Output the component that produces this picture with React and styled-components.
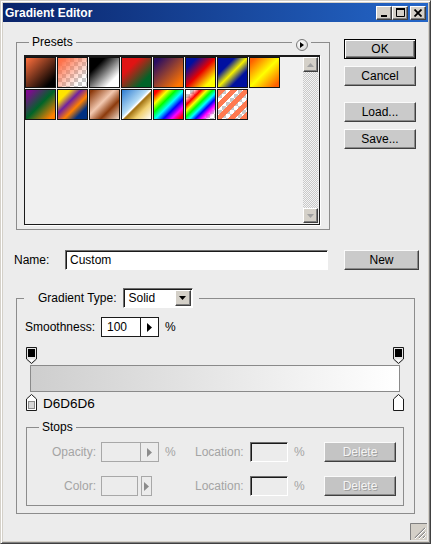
import React from "react";
import styled, { createGlobalStyle } from "styled-components";

const GlobalStyle = createGlobalStyle`
  html, body { margin: 0; padding: 0; background: #d4d0c8; }
  body {
    font-family: "Liberation Sans", Arial, sans-serif;
    font-size: 12px;
    color: #000;
  }
  * { box-sizing: border-box; }
`;

const CHECK =
  "conic-gradient(#c8c8c8 25%, #fff 0 50%, #c8c8c8 0 75%, #fff 0) 0 0 / 8px 8px";

const presets = [
  "linear-gradient(135deg, #f26a3a 5%, #000 85%)",
  `linear-gradient(135deg, #ff7048 10%, rgba(255,112,72,0) 80%), ${CHECK}`,
  "linear-gradient(135deg, #000 25%, #fff 78%)",
  "linear-gradient(135deg, #e01414 30%, #006428 78%)",
  "linear-gradient(135deg, #2a0e62 10%, #ff7400 88%)",
  "linear-gradient(135deg, #0010a0 18%, #e80000 50%, #ffff00 82%)",
  "linear-gradient(135deg, #0010a0 28%, #f4f000 50%, #0010a0 72%)",
  "linear-gradient(135deg, #ff6000 8%, #ffff00 50%, #ff6000 92%)",
  "linear-gradient(135deg, #800a90 8%, #006428 50%, #ff8000 90%)",
  "linear-gradient(135deg, #ffe400 20%, #7020a0 40%, #ff8000 60%, #003080 80%)",
  "linear-gradient(135deg, #8c3a0c 5%, #f2c8b0 42%, #8c3a0c 68%, #f2dccc 100%)",
  "linear-gradient(135deg, #2e7bd0 0%, #b4dcf5 44%, #fff 50%, #a07010 54%, #f0d070 72%, #fff 100%)",
  "linear-gradient(135deg, #f00 8%, #ff0 24%, #0f0 38%, #0ff 52%, #00f 66%, #f0f 80%, #f00 94%)",
  `linear-gradient(135deg, rgba(255,0,0,0) 12%, #f00 26%, #ff0 36%, #0f0 46%, #0ff 56%, #00f 66%, #f0f 76%, rgba(255,0,255,0) 90%), ${CHECK}`,
  `repeating-linear-gradient(135deg, #ff7a50 0 5px, rgba(255,122,80,0) 5px 9px), ${CHECK}`,
];

const Window = styled.div`
  width: 431px;
  height: 544px;
  display: flex;
  flex-direction: column;
  background: #d4d0c8;
  border: 1px solid;
  border-color: #d4d0c8 #404040 #404040 #d4d0c8;
  box-shadow: inset 1px 1px 0 #fff, inset -1px -1px 0 #808080;
  padding: 2px;
`;

const TitleBar = styled.div`
  height: 19px;
  display: flex;
  align-items: center;
  padding: 0 2px 0 2px;
  background: linear-gradient(90deg, #0a246a, #2466c8);
`;

const Title = styled.span`
  flex: 1;
  color: #fff;
  font-weight: bold;
  font-size: 12px;
`;

const CaptionButton = styled.div`
  width: 16px;
  height: 14px;
  margin-left: ${(p) => p.$gap || 0}px;
  background: #d4d0c8;
  border: 1px solid;
  border-color: #fff #404040 #404040 #fff;
  box-shadow: inset -1px -1px 0 #808080;
  display: flex;
  align-items: center;
  justify-content: center;
`;

const Body = styled.div`
  flex: 1;
  display: flex;
  flex-direction: column;
  background: #ececec;
  padding: 14px 0 0 13px;
`;

const TopSection = styled.div`
  display: flex;
  align-items: flex-start;
  gap: 14px;
`;

const Group = styled.fieldset`
  position: relative;
  margin: 0;
  min-width: 0;
  border: 1px solid #8c8c8c;
  border-radius: 0;
`;

const PresetsGroup = styled(Group)`
  width: 314px;
  padding: 0 9px 4px 7px;
`;

const GroupLabel = styled.legend`
  padding: 0 3px;
  margin-left: ${(p) => p.$ml || 0}px;
  line-height: 13px;
  font-size: 12px;
`;

const MenuButtonWrap = styled.div`
  position: absolute;
  top: -11px;
  right: 18px;
  width: 19px;
  height: 13px;
  background: #ececec;
  display: flex;
  align-items: center;
  justify-content: center;
`;

const MenuCircle = styled.div`
  width: 12px;
  height: 12px;
  border-radius: 50%;
  border: 1px solid #7a7a7a;
  background: radial-gradient(circle at 35% 35%, #fff, #d0d0d0);
  display: flex;
  align-items: center;
  justify-content: center;
`;

const PresetList = styled.div`
  width: 296px;
  height: 170px;
  margin-top: 6px;
  display: flex;
  background: #f0f0f0;
  border: 1px solid #1a1a1a;
  border-top-width: 2px;
  box-shadow: 1px 1px 0 #fff;
`;

const SwatchGrid = styled.div`
  flex: 1;
  display: grid;
  grid-template-columns: repeat(8, 31px);
  grid-auto-rows: 31px;
  gap: 1px;
  align-content: start;
`;

const Swatch = styled.div`
  border: 1px solid #141414;
  background: ${(p) => p.$bg};
`;

const ScrollBar = styled.div`
  width: 15px;
  margin: 0 1px 1px 0;
  display: flex;
  flex-direction: column;
  justify-content: space-between;
  background: repeating-conic-gradient(#c8c8c8 0 25%, #f4f4f4 0 50%) 0 0 / 2px 2px;
`;

const ScrollButton = styled.div`
  height: 15px;
  background: #d4d0c8;
  border: 1px solid;
  border-color: #fff #404040 #404040 #fff;
  box-shadow: inset -1px -1px 0 #808080;
  display: flex;
  align-items: center;
  justify-content: center;
`;

const ButtonColumn = styled.div`
  display: flex;
  flex-direction: column;
  padding-top: 3px;
`;

const Button = styled.div`
  width: ${(p) => p.$w || 72}px;
  height: 20px;
  margin-top: ${(p) => p.$mt || 0}px;
  margin-left: ${(p) => p.$ml || 0}px;
  display: flex;
  align-items: center;
  justify-content: center;
  font-size: 12px;
  background: ${(p) => (p.$disabled ? "#c4c4c4" : "#cacaca")};
  color: ${(p) => (p.$disabled ? "#f4f4f4" : "#000")};
  text-shadow: ${(p) => (p.$disabled ? "1px 1px 0 #a0a0a0" : "none")};
  border: 1px solid;
  border-color: ${(p) =>
    p.$default ? "#000" : "#fafafa #404040 #404040 #fafafa"};
  box-shadow: ${(p) =>
    p.$default
      ? "inset 1px 1px 0 #fff, inset -1px -1px 0 #404040, inset -2px -2px 0 #808080"
      : "inset -1px -1px 0 #8a8a8a"};
`;

const NameRow = styled.div`
  display: flex;
  align-items: center;
  height: 20px;
  margin: 20px 0 0 -2px;
`;

const Label = styled.span`
  width: ${(p) => p.$w}px;
  flex-shrink: 0;
  font-size: 12px;
  color: ${(p) => (p.$disabled ? "#a4a4a4" : "#000")};
  text-align: ${(p) => (p.$right ? "right" : "left")};
  padding-right: ${(p) => (p.$right ? 5 : 0)}px;
  padding-left: ${(p) => p.$pl || 0}px;
`;

const TextField = styled.div`
  width: ${(p) => p.$w}px;
  height: 20px;
  display: flex;
  align-items: center;
  padding-left: 4px;
  font-size: 12px;
  background: ${(p) => (p.$disabled ? "#ececec" : "#fff")};
  border: 1px solid;
  border-color: #6e6e6e #fff #fff #6e6e6e;
  box-shadow: inset 1px 1px 0 #1a1a1a;
`;

const GradientGroup = styled(Group)`
  width: 399px;
  margin-top: 18px;
  padding: 0 9px 7px 9px;
`;

const TypeLegend = styled.legend`
  display: flex;
  align-items: center;
  height: 20px;
  margin-left: -2px;
  padding: 0 6px 0 14px;
  font-size: 12px;
`;

const Select = styled.div`
  width: 70px;
  height: 20px;
  margin-left: 6px;
  display: flex;
  align-items: center;
  justify-content: space-between;
  padding: 0 1px 0 5px;
  background: #fff;
  border: 1px solid;
  border-color: #6e6e6e #fff #fff #6e6e6e;
  box-shadow: inset 1px 1px 0 #1a1a1a;
`;

const DropButton = styled.div`
  width: 16px;
  height: 16px;
  background: #d4d0c8;
  border: 1px solid;
  border-color: #fff #404040 #404040 #fff;
  box-shadow: inset -1px -1px 0 #808080;
  display: flex;
  align-items: center;
  justify-content: center;
`;

const SmoothRow = styled.div`
  display: flex;
  align-items: center;
  height: 20px;
  margin: 9px 0 0 -1px;
`;

const SpinBox = styled.div`
  width: 58px;
  height: 20px;
  display: flex;
  background: ${(p) => (p.$disabled ? "#ececec" : "#fff")};
  border: 1px solid ${(p) => (p.$disabled ? "#a8a8a8" : "#1a1a1a")};
`;

const SpinValue = styled.div`
  flex: 1;
  display: flex;
  align-items: center;
  padding-left: 5px;
  font-size: 12px;
`;

const SpinArrow = styled.div`
  width: 18px;
  display: flex;
  align-items: center;
  justify-content: center;
  border-left: 1px solid ${(p) => (p.$disabled ? "#a8a8a8" : "#1a1a1a")};
`;

const Percent = styled.span`
  margin-left: 6px;
  color: ${(p) => (p.$disabled ? "#a4a4a4" : "#000")};
`;

const StopRow = styled.div`
  display: flex;
  justify-content: space-between;
  align-items: ${(p) => p.$align || "flex-start"};
  height: 17px;
  margin-top: ${(p) => p.$mt}px;
  padding-right: 1px;
`;

const GradientBar = styled.div`
  height: 27px;
  margin: 1px 5px 0 4px;
  border: 1px solid #8a8a8a;
  background: linear-gradient(90deg, #cecece, #fff);
`;

const ColorCode = styled.span`
  flex: 1;
  margin-left: 6px;
  font-size: 13.5px;
  line-height: 14px;
`;

const StopsGroup = styled(Group)`
  margin: 10px 1px 0 0;
  padding: 0 0 9px 11px;
`;

const StopsGrid = styled.div`
  margin-top: 8px;
  display: grid;
  grid-template-columns: 63px 58px 36px 55px 38px 36px 72px;
  grid-auto-rows: 20px;
  row-gap: 14px;
  align-items: center;
`;

const ColorSwatch = styled.div`
  display: flex;
  gap: 3px;
  height: 20px;
`;

const SwatchBox = styled.div`
  width: 37px;
  border: 1px solid #a8a8a8;
`;

const ArrowBox = styled.div`
  width: 11px;
  border: 1px solid #a8a8a8;
  display: flex;
  align-items: center;
  justify-content: center;
`;

const Footer = styled.div`
  margin-top: auto;
  display: flex;
  justify-content: flex-end;
  padding: 0 1px 1px 0;
`;

const RightArrow = ({ color = "#000" }) => (
  <svg width="5" height="9" viewBox="0 0 5 9">
    <path d="M0 0L5 4.5L0 9Z" fill={color} />
  </svg>
);

const TopStop = () => (
  <svg width="11" height="17" viewBox="0 0 11 17">
    <path d="M0.5 0.5H10.5V12L5.5 16.5L0.5 12Z" fill="#e4e4e4" stroke="#1a1a1a" />
    <rect x="2" y="2" width="7" height="8" fill="#000" />
    <path d="M2.5 12.5L5.5 15L8.5 12.5Z" fill="#fff" />
  </svg>
);

const BottomStop = ({ color }) => (
  <svg width="11" height="17" viewBox="0 0 11 17">
    <path d="M5.5 0.5L10.5 5V16.5H0.5V5Z" fill="#fff" stroke="#1a1a1a" />
    <rect x="2.5" y="7.5" width="6" height="7" fill={color} stroke={color === "#fff" ? "none" : "#8a8a8a"} />
  </svg>
);

const Grip = () => (
  <svg width="17" height="17" viewBox="0 0 17 17">
    <rect x="0" y="0" width="17" height="17" fill="#d4d0c8" />
    <path d="M0.5 17V0.5H17" fill="none" stroke="#808080" />
    <path d="M15 5L5 15M15 9L9 15M15 13L13 15" stroke="#8a8a8a" strokeWidth="1.2" />
    <path d="M16 5L5 16M16 9L9 16M16 13L13 16" stroke="#fff" strokeWidth="1" />
  </svg>
);

export default function App() {
  return (
    <>
      <GlobalStyle />
      <Window>
        <TitleBar>
          <Title>Gradient Editor</Title>
          <CaptionButton>
            <svg width="8" height="8" viewBox="0 0 8 8">
              <rect x="1" y="6" width="6" height="2" fill="#000" />
            </svg>
          </CaptionButton>
          <CaptionButton>
            <svg width="9" height="9" viewBox="0 0 9 9">
              <path d="M0.5 1.5H8.5V8.5H0.5Z" fill="none" stroke="#000" />
              <rect x="0" y="0" width="9" height="2" fill="#000" />
            </svg>
          </CaptionButton>
          <CaptionButton $gap={2}>
            <svg width="8" height="8" viewBox="0 0 8 8">
              <path d="M0.5 0.5L7.5 7.5M7.5 0.5L0.5 7.5" stroke="#000" strokeWidth="1.8" />
            </svg>
          </CaptionButton>
        </TitleBar>
        <Body>
          <TopSection>
            <PresetsGroup>
              <GroupLabel $ml={5}>Presets</GroupLabel>
              <MenuButtonWrap>
                <MenuCircle>
                  <svg width="4" height="6" viewBox="0 0 4 6">
                    <path d="M0 0L4 3L0 6Z" fill="#000" />
                  </svg>
                </MenuCircle>
              </MenuButtonWrap>
              <PresetList>
                <SwatchGrid>
                  {presets.map((bg, i) => (
                    <Swatch key={i} $bg={bg} />
                  ))}
                </SwatchGrid>
                <ScrollBar>
                  <ScrollButton>
                    <svg width="7" height="4" viewBox="0 0 7 4">
                      <path d="M0 4L3.5 0L7 4Z" fill="#a0a0a0" />
                    </svg>
                  </ScrollButton>
                  <ScrollButton>
                    <svg width="7" height="4" viewBox="0 0 7 4">
                      <path d="M0 0L3.5 4L7 0Z" fill="#a0a0a0" />
                    </svg>
                  </ScrollButton>
                </ScrollBar>
              </PresetList>
            </PresetsGroup>
            <ButtonColumn>
              <Button $default>OK</Button>
              <Button $mt={7}>Cancel</Button>
              <Button $mt={16}>Load...</Button>
              <Button $mt={7}>Save...</Button>
            </ButtonColumn>
          </TopSection>

          <NameRow>
            <Label $w={51}>Name:</Label>
            <TextField $w={263}>Custom</TextField>
            <Button $w={75} $ml={16}>New</Button>
          </NameRow>

          <GradientGroup>
            <TypeLegend>
              Gradient Type:
              <Select>
                Solid
                <DropButton>
                  <svg width="7" height="4" viewBox="0 0 7 4">
                    <path d="M0 0L3.5 4L7 0Z" fill="#000" />
                  </svg>
                </DropButton>
              </Select>
            </TypeLegend>

            <SmoothRow>
              <Label $w={76}>Smoothness:</Label>
              <SpinBox>
                <SpinValue>100</SpinValue>
                <SpinArrow>
                  <RightArrow />
                </SpinArrow>
              </SpinBox>
              <Percent>%</Percent>
            </SmoothRow>

            <StopRow $mt={10}>
              <TopStop />
              <TopStop />
            </StopRow>
            <GradientBar />
            <StopRow $mt={2} $align="flex-end">
              <BottomStop color="#d6d6d6" />
              <ColorCode>D6D6D6</ColorCode>
              <BottomStop color="#fff" />
            </StopRow>

            <StopsGroup>
              <GroupLabel $ml={1}>Stops</GroupLabel>
              <StopsGrid>
                <Label $disabled $right>Opacity:</Label>
                <SpinBox $disabled>
                  <SpinValue />
                  <SpinArrow $disabled>
                    <RightArrow color="#8c8c8c" />
                  </SpinArrow>
                </SpinBox>
                <Percent $disabled>%</Percent>
                <Label $disabled>Location:</Label>
                <TextField $w={38} $disabled />
                <Percent $disabled>%</Percent>
                <Button $disabled>Delete</Button>

                <Label $disabled $right>Color:</Label>
                <ColorSwatch>
                  <SwatchBox />
                  <ArrowBox>
                    <RightArrow color="#8c8c8c" />
                  </ArrowBox>
                </ColorSwatch>
                <span />
                <Label $disabled>Location:</Label>
                <TextField $w={38} $disabled />
                <Percent $disabled>%</Percent>
                <Button $disabled>Delete</Button>
              </StopsGrid>
            </StopsGroup>
          </GradientGroup>

          <Footer>
            <Grip />
          </Footer>
        </Body>
      </Window>
    </>
  );
}
